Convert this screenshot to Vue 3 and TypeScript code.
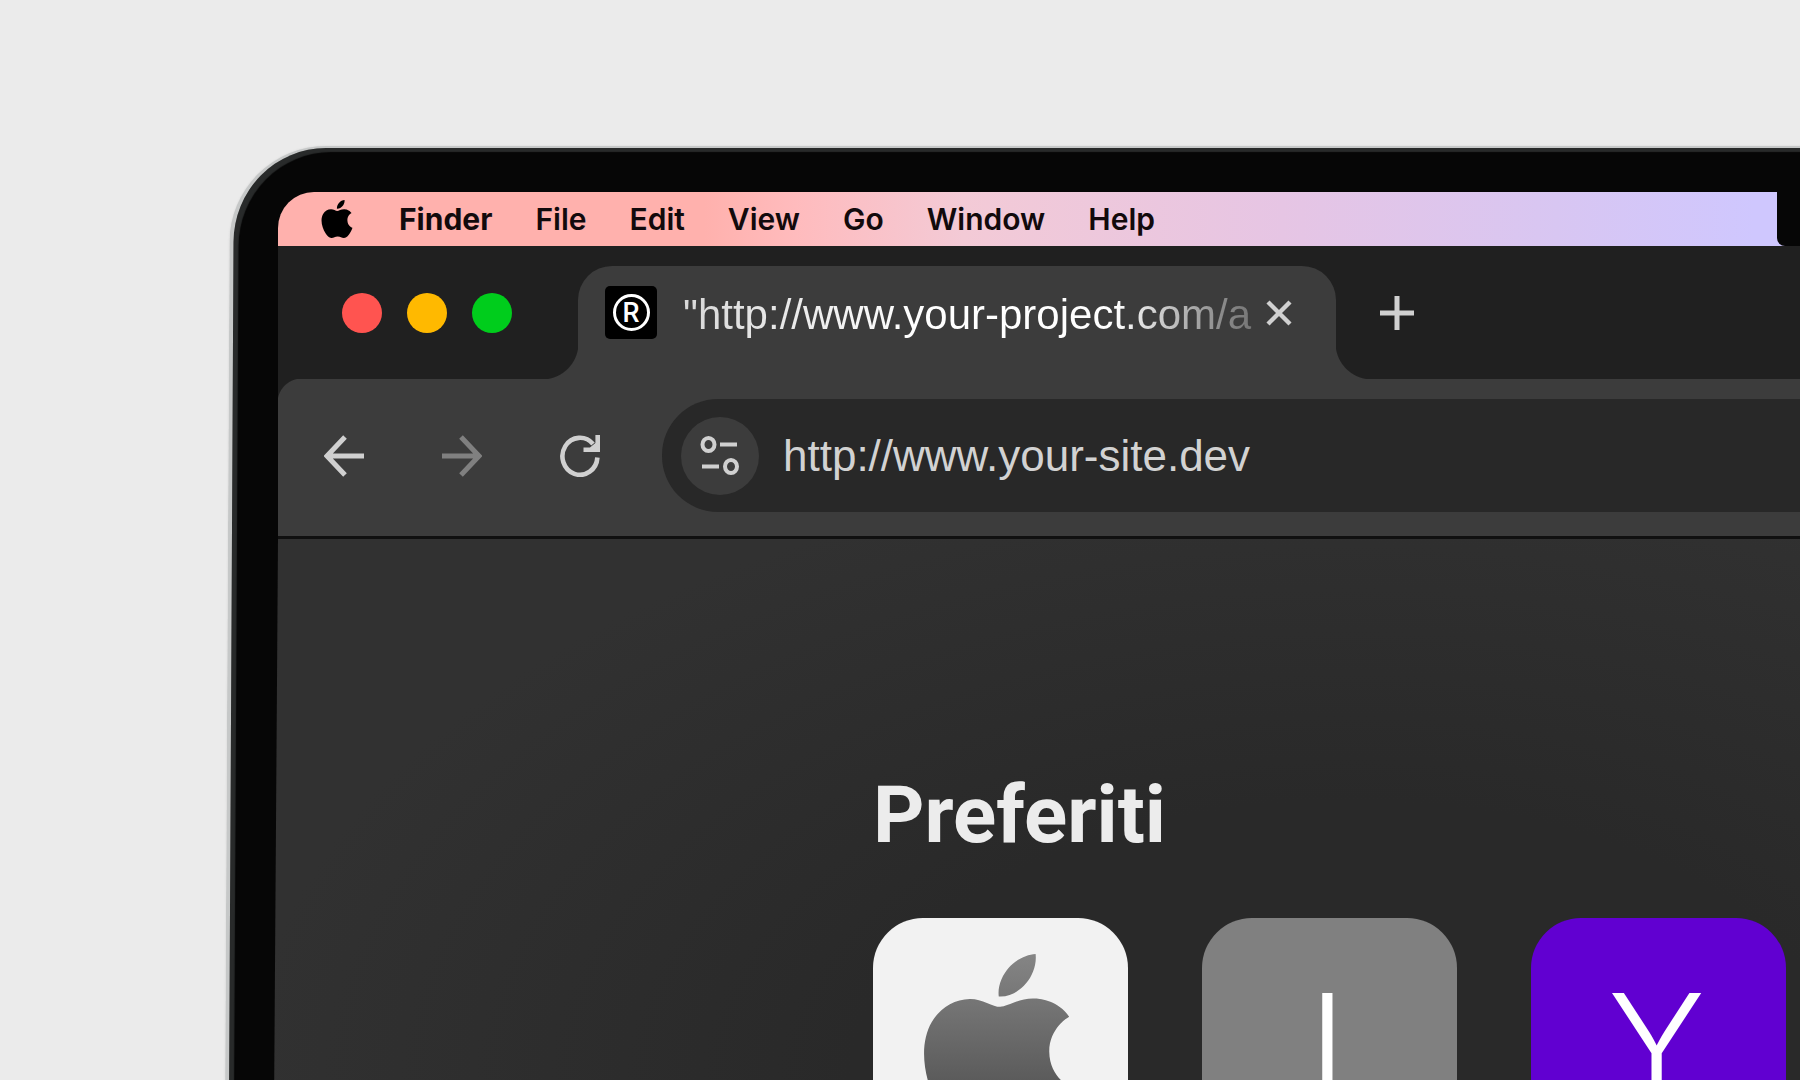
<script setup lang="ts">
import { ref } from 'vue'

interface Favourite {
  name: string
  tone: string
  letter?: string
}

const menus: string[] = ['File', 'Edit', 'View', 'Go', 'Window', 'Help']
const lights: string[] = ['close', 'minimise', 'zoom']
const favourites: Favourite[] = [
  { name: 'Apple', tone: 'light' },
  { name: 'I', tone: 'grey', letter: 'I' },
  { name: 'Y', tone: 'violet', letter: 'Y' },
]
const address = ref('http://www.your-site.dev')

const applePath =
  'M12.152 6.896c-.948 0-2.415-1.078-3.96-1.04-2.04.027-3.91 1.183-4.961 3.014-2.117 3.675-.546 9.103 1.519 12.09 1.013 1.454 2.208 3.09 3.792 3.039 1.52-.065 2.09-.987 3.935-.987 1.831 0 2.35.987 3.96.948 1.637-.026 2.676-1.48 3.676-2.948 1.156-1.688 1.636-3.325 1.662-3.415-.039-.013-3.182-1.221-3.22-4.857-.026-3.04 2.48-4.494 2.597-4.559-1.429-2.09-3.623-2.324-4.39-2.376-2-.156-3.675 1.09-4.61 1.09zM15.53 3.83c.843-1.012 1.4-2.427 1.245-3.83-1.207.052-2.662.805-3.532 1.818-.78.896-1.454 2.338-1.273 3.714 1.338.104 2.715-.688 3.559-1.701'
</script>

<template>
  <div class="desk">
    <div class="laptop">
      <div class="screen">
        <nav class="menubar" aria-label="Menu bar">
          <button class="menu apple" aria-label="Apple menu">
            <svg viewBox="0 0 24 24" width="38" height="38" aria-hidden="true"><path :d="applePath" fill="currentColor" /></svg>
          </button>
          <button class="menu app">Finder</button>
          <button v-for="m in menus" :key="m" class="menu">{{ m }}</button>
          <span class="notch"></span>
        </nav>

        <div class="browser">
          <header class="strip">
            <div class="lights">
              <button v-for="l in lights" :key="l" :class="['light', l]" :aria-label="l"></button>
            </div>
            <div class="tab">
              <span class="favicon"><span class="mark">R</span></span>
              <span class="title">"http://www.your-project.com/a</span>
              <button class="icon" aria-label="Close tab">
                <svg viewBox="0 0 26 26" width="26" height="26" aria-hidden="true"><path d="M2 2 24 24M24 2 2 24" fill="none" stroke="currentColor" stroke-width="4.4" /></svg>
              </button>
            </div>
            <button class="icon plus" aria-label="New tab">
              <svg viewBox="0 0 34 34" width="34" height="34" aria-hidden="true"><path d="M17 0V34M0 17H34" fill="none" stroke="currentColor" stroke-width="5" /></svg>
            </button>
          </header>

          <div class="toolbar">
            <div class="history">
              <button class="icon" aria-label="Back">
                <svg viewBox="0 0 40 42" width="40" height="42" aria-hidden="true"><path d="M21 2 3 21 21 40M3 21H40" fill="none" stroke="currentColor" stroke-width="5" /></svg>
              </button>
              <button class="icon dim" aria-label="Forward">
                <svg viewBox="0 0 40 42" width="40" height="42" aria-hidden="true"><path d="M19 2 37 21 19 40M37 21H0" fill="none" stroke="currentColor" stroke-width="5" /></svg>
              </button>
              <button class="icon" aria-label="Reload">
                <svg viewBox="0 0 40 42" width="40" height="42" aria-hidden="true"><path d="M37.400 22.500A17.500 18.500 0 1 1 33 9" fill="none" stroke="currentColor" stroke-width="4.600" /><path d="M35.400 0H40V17H23.500V12.500H30L35.400 8Z" fill="currentColor" /></svg>
              </button>
            </div>
            <form class="address" @submit.prevent>
              <button class="site" type="button" aria-label="Site settings">
                <svg viewBox="0 0 40 40" width="40" height="40" aria-hidden="true"><g fill="none" stroke="currentColor" stroke-width="4"><ellipse cx="8.500" cy="8.500" rx="6" ry="6.500" /><path d="M20 8.500H37M2 30.500H19" /><ellipse cx="31" cy="30.500" rx="6" ry="6.500" /></g></svg>
              </button>
              <input v-model="address" type="text" aria-label="Address" spellcheck="false" />
            </form>
          </div>

          <main class="page">
            <section class="favourites">
              <h1>Preferiti</h1>
              <div class="tiles">
                <a v-for="f in favourites" :key="f.name" href="#" :class="['tile', f.tone]" :aria-label="f.name">
                  <template v-if="f.letter">{{ f.letter }}</template>
                  <svg v-else viewBox="0 0 24 24" width="184" height="184" aria-hidden="true">
                    <defs>
                      <linearGradient id="steel" x1="0" y1="0" x2="0" y2="1">
                        <stop offset="0" stop-color="#858585" />
                        <stop offset="1" stop-color="#484848" />
                      </linearGradient>
                    </defs>
                    <path :d="applePath" fill="url(#steel)" />
                  </svg>
                </a>
              </div>
            </section>
          </main>
        </div>
      </div>
    </div>
  </div>
</template>

<style>
body {
  margin: 0;
  background: #ebebeb;
}
</style>

<style scoped>
.desk {
  box-sizing: border-box;
  height: 100vh;
  padding: 146px 0 0 230px;
  overflow: hidden;
  background: #ebebeb;
}
.laptop {
  position: relative;
  box-sizing: border-box;
  height: 100%;
  padding: 46px 0 0 48px;
}
/* bezel: the machine leans a little to the left */
.laptop::before {
  content: '';
  position: absolute;
  inset: 0 -40px -40px 0;
  border: solid #c6c8c8;
  border-width: 2px 0 0 4px;
  border-top-left-radius: 96px;
  background: #060606;
  box-shadow: inset 5px 4px 1px #282a2a, 0 0 2px #d4d4d4;
  transform: skewX(-0.3deg);
  transform-origin: top;
}
.screen {
  position: relative;
  display: flex;
  flex-direction: column;
  height: 100%;
}
button {
  margin: 0;
  padding: 0;
  border: 0;
  background: none;
  color: inherit;
  font: inherit;
}
svg {
  display: block;
}

.menubar {
  display: flex;
  flex: none;
  align-items: center;
  gap: 43px;
  height: 54px;
  padding-left: 40px;
  border-top-left-radius: 36px;
  background: linear-gradient(90deg, #ffb1ad 0, #ffb1ad 28%, #ffbbbd 34%, #f3cad6 45%, #e6c5e4 66%, #d8c6f2 84%, #cfc7fe 97%);
  color: #120a0c;
  font: 600 30px/36px Inter, sans-serif;
}
.app {
  font-weight: 700;
}
.apple {
  color: #000;
}
.notch {
  width: 23px;
  height: 54px;
  margin-left: auto;
  border-bottom-left-radius: 8px;
  background: #060606;
}

.browser {
  display: flex;
  flex: 1;
  flex-direction: column;
  min-height: 0;
}
.strip {
  display: flex;
  flex: none;
  height: 133px;
  background: #202020;
  color: #d2d2d2;
}
.lights {
  display: flex;
  flex: none;
  gap: 25px;
  box-sizing: border-box;
  width: 300px;
  padding: 47px 0 0 64px;
}
.light {
  width: 40px;
  height: 40px;
  border-radius: 50%;
}
.close {
  background: #ff5450;
}
.minimise {
  background: #ffb900;
}
.zoom {
  background: #00cd1c;
}
.tab {
  position: relative;
  display: flex;
  flex: none;
  align-items: center;
  box-sizing: border-box;
  width: 758px;
  margin-top: 20px;
  padding: 0 44px 20px 27px;
  border-radius: 34px 34px 0 0;
  background: #3c3c3c;
}
.tab::before,
.tab::after {
  content: '';
  position: absolute;
  bottom: 0;
  width: 36px;
  height: 36px;
}
.tab::before {
  right: 100%;
  background: radial-gradient(circle at 0 0, transparent 36px, #3c3c3c 37px);
}
.tab::after {
  left: 100%;
  background: radial-gradient(circle at 100% 0, transparent 36px, #3c3c3c 37px);
}
.favicon {
  display: flex;
  flex: none;
  align-items: center;
  justify-content: center;
  width: 52px;
  height: 53px;
  border-radius: 5px;
  background: #000;
}
.mark {
  box-sizing: border-box;
  width: 37px;
  height: 37px;
  border: 3px solid #fff;
  border-radius: 50%;
  color: #fff;
  font: 500 27px/32px Roboto, sans-serif;
  text-align: center;
}
.title {
  flex: 1;
  min-width: 0;
  margin-left: 26px;
  padding-top: 4px;
  overflow: hidden;
  background: linear-gradient(90deg, #d8d8d8, #fff 40%, #fff 74%, #8d8d8d 92%, #6c6c6c);
  background-clip: text;
  color: transparent;
  font: 42px/52px "Liberation Sans", sans-serif;
  white-space: nowrap;
}
.icon {
  flex: none;
  color: #d0d0d0;
}
.plus {
  margin: 0 0 0 44px;
}

.toolbar {
  display: flex;
  flex: none;
  align-items: center;
  height: 153px;
  padding-bottom: 4px;
  border-bottom: 3px solid #101010;
  background: radial-gradient(circle at 24px 24px, #3c3c3c 24px, #202020 25px) 0 0 / 24px 24px no-repeat,
    linear-gradient(#3c3c3c, #3c3c3c) 24px 0 no-repeat,
    linear-gradient(#3c3c3c, #3c3c3c) 0 24px no-repeat;
}
.history {
  display: flex;
  flex: none;
  gap: 78px;
  padding: 0 62px 0 46px;
}
.icon.dim {
  color: #808080;
}
.address {
  display: flex;
  flex: 1;
  align-items: center;
  box-sizing: border-box;
  height: 113px;
  padding-left: 19px;
  border-radius: 56px 0 0 56px;
  background: #282828;
}
.site {
  display: flex;
  flex: none;
  align-items: center;
  justify-content: center;
  width: 78px;
  height: 78px;
  border-radius: 50%;
  background: #3c3c3c;
  color: #d0d0d0;
}
input {
  flex: 1;
  min-width: 0;
  margin-left: 24px;
  padding: 0;
  border: 0;
  outline: 0;
  background: none;
  color: #d2d2d2;
  font: 44px/56px "Liberation Sans", sans-serif;
}

.page {
  position: relative;
  flex: 1;
  min-height: 0;
}
.page::before {
  content: '';
  position: absolute;
  inset: 0 -10px 0 0;
  background: radial-gradient(ellipse 1100px 620px at 70% 100%, #292929 45%, #313131);
  transform: skewX(-0.4deg);
  transform-origin: top;
}
.favourites {
  position: relative;
  padding: 228px 0 0 595px;
}
h1 {
  margin: 0;
  color: #ececec;
  font: 700 80px/96px Roboto, sans-serif;
}
.tiles {
  display: flex;
  gap: 74px;
  margin-top: 55px;
}
.tile {
  display: flex;
  flex: none;
  align-items: center;
  justify-content: center;
  box-sizing: border-box;
  width: 255px;
  height: 255px;
  padding-right: 4px;
  border-radius: 50px;
  color: #fff;
  font: 300 146px/180px Inter, sans-serif;
  text-decoration: none;
}
.tile.light {
  background: #f2f2f2;
}
.grey {
  background: #808080;
}
.violet {
  background: #6100d1;
}
</style>
